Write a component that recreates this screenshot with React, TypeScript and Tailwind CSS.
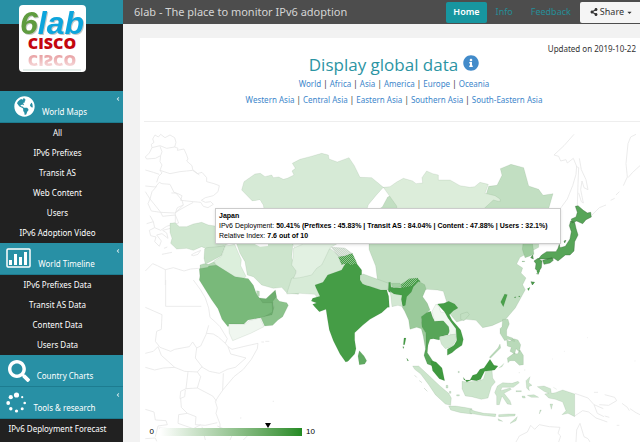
import type { ReactNode } from 'react'
import { FaGlobeAmericas, FaInfoCircle, FaSearch, FaShareAlt, FaCaretDown, FaAngleLeft } from 'react-icons/fa'

const worldLinks = ['World', 'Africa', 'Asia', 'America', 'Europe', 'Oceania']
const regionLinks = ['Western Asia', 'Central Asia', 'Eastern Asia', 'Southern Asia', 'South-Eastern Asia']

function Logo() {
  return (
    <svg viewBox="0 0 67 67" className="w-[67px] h-[67px]" role="img" aria-label="6lab Cisco">
      <defs>
        <linearGradient id="fade" x1="0" y1="0" x2="0" y2="1">
          <stop offset="0" stopColor="#fff" stopOpacity="0.3" />
          <stop offset="1" stopColor="#fff" stopOpacity="0.8" />
        </linearGradient>
      </defs>
      <rect width="67" height="67" rx="4" fill="#fff" />
      <text
        x="1"
        y="29"
        fontFamily="'Liberation Sans', sans-serif"
        fontWeight="700"
        fontStyle="italic"
        fontSize="32"
        fill="#0da5dc"
        style={{ filter: 'drop-shadow(1px 1px 0 #c4c8c6)' }}
      >
        <tspan fill="#5f9c3f">6</tspan>lab
      </text>
      <g fontFamily="'Open Sans', sans-serif" fontWeight="800" fontSize="16" textAnchor="middle" fill="#c4060d">
        <text x="33" y="44">CISCO</text>
        <text x="33" y="-50" transform="scale(1 -1)" opacity="0.6">CISCO</text>
      </g>
      <rect y="48" width="67" height="15" fill="url(#fade)" />
      <path d="M4 65H62" stroke="#e3eeea" strokeWidth="2" />
    </svg>
  )
}

function ChartIcon() {
  return (
    <svg viewBox="0 0 25 21" className="w-[25px] h-[21px]" fill="#fff">
      <rect x="1" y="1" width="23" height="18" rx="1" fill="none" stroke="#fff" strokeWidth="1.5" />
      <path d="M3 12h3v5H3zM8 6h3v11H8zM13 9h3v8h-3zM18 4h3v13h-3z" />
    </svg>
  )
}

function SpinnerIcon() {
  return (
    <svg viewBox="0 0 21 21" className="w-[21px] h-[21px]" fill="#fff">
      <circle cx="10.5" cy="3" r="2.6" />
      <circle cx="4.8" cy="5.2" r="2.1" />
      <circle cx="2.2" cy="11" r="1.9" />
      <circle cx="4.8" cy="16.8" r="1.7" />
      <circle cx="10.5" cy="19" r="1.6" />
      <circle cx="16.2" cy="16.8" r="1.5" />
      <circle cx="18.7" cy="11" r="1.3" />
      <circle cx="16.2" cy="5.2" r="1.1" />
    </svg>
  )
}

const sections: { title: string; icon: ReactNode; items: string[]; arrow: boolean }[] = [
  {
    title: 'World Maps',
    icon: <FaGlobeAmericas className="w-[21px] h-[21px]" />,
    items: ['All', 'IPv6 Prefixes', 'Transit AS', 'Web Content', 'Users', 'IPv6 Adoption Video'],
    arrow: true,
  },
  {
    title: 'World Timeline',
    icon: <ChartIcon />,
    items: ['IPv6 Prefixes Data', 'Transit AS Data', 'Content Data', 'Users Data'],
    arrow: true,
  },
  { title: 'Country Charts', icon: <FaSearch className="w-[22px] h-[22px]" />, items: [], arrow: false },
  { title: 'Tools & research', icon: <SpinnerIcon />, items: ['IPv6 Deployment Forecast'], arrow: true },
]

function Sidebar() {
  return (
    <nav className="w-[123px] shrink-0 bg-[#212121] text-white text-[8px]">
      <div className="h-6 bg-[#2890a5]" />
      <a href="#home" className="flex justify-center h-[67px] pr-[18px]">
        <span className="-mt-[19px]"><Logo /></span>
      </a>
      {sections.map((s) => (
        <div key={s.title}>
          <button type="button" className="relative flex w-full h-8 items-start justify-center gap-[7px] pt-[5px] pr-[22px] bg-[#2890a5] border-b border-[#1d7c90]">
            {s.icon}
            <span className="pt-[10px] leading-3">{s.title}</span>
            {s.arrow && <FaAngleLeft className="absolute right-0.5 top-[5px] w-1.5 h-1.5 opacity-80" />}
          </button>
          <ul>
            {s.items.map((item) => (
              <li key={item}>
                <a href="#data" className="block h-5 leading-5 text-center pr-2">{item}</a>
              </li>
            ))}
          </ul>
        </div>
      ))}
    </nav>
  )
}

function TopBar() {
  return (
    <header className="flex h-6 items-center bg-[#4d4d4d] pl-[11px] overflow-hidden">
      <h1 className="flex-1 text-[11px] whitespace-nowrap text-[#d5d5d5]">6lab - The place to monitor IPv6 adoption</h1>
      <nav className="flex items-center text-[9px] text-[#268d98]">
        <a href="#home" className="h-[21px] leading-5 px-[7px] rounded-xs bg-[#1796a0] font-semibold text-white">Home</a>
        <a href="#info" className="px-[9px]">Info</a>
        <a href="#feedback" className="px-[9px]">Feedback</a>
      </nav>
      <button type="button" className="flex h-[21px] items-center gap-0.5 rounded-l-xs bg-[#f5f5f5] pl-[10px] pr-[7px] text-[9px] text-[#333]">
        <FaShareAlt className="w-2 h-2" />
        Share
        <FaCaretDown className="w-[7px] h-[7px]" />
      </button>
    </header>
  )
}

function LinkRow({ links }: { links: string[] }) {
  return (
    <p className="leading-4 text-[8px] text-[#333]">
      {links.map((l, i) => (
        <span key={l}>
          {i > 0 && ' | '}
          <a href="#region" className="text-[#3c86cb]">{l}</a>
        </span>
      ))}
    </p>
  )
}

// Shapes are drawn on a grid three times finer than the map units, one group per region.
const shape = { fill: 'currentColor', stroke: '#2b5b2b', strokeOpacity: 0.14, strokeWidth: 2, strokeLinejoin: 'round' as const }
const line = { fill: 'none', stroke: '#e6e6e6', strokeWidth: 2.4, strokeLinejoin: 'round' as const }

function AsiaMap() {
  return (
    <svg viewBox="0 0 500 320" className="block w-full" role="img" aria-label="IPv6 adoption in Asia">
      <defs>
        <pattern id="hatch" width="6" height="6" patternUnits="userSpaceOnUse">
          <rect width="6" height="6" fill="#459d46" />
          <path d="M0 0h3v3H0zM3 3h3v3H3z" fill="#8fc48f" />
        </pattern>
        <pattern id="hatchGrey" width="6" height="6" patternUnits="userSpaceOnUse">
          <rect width="6" height="6" fill="#c9d9c9" />
          <path d="M0 0h3v3H0zM3 3h3v3H3z" fill="#dfe6df" />
        </pattern>
      </defs>

      {/* Europe and the Levant */}
      <g transform="translate(0 3) scale(0.33333)" {...line}>
        <path d="M45 30L55 36 62 28 75 38 90 30 104 38 108 52 104 66 114 70 112 76 132 72 140 90 144 102 140 108 156 122 158 134 178 150" />
        <path d="M45 30L38 42 42 52 34 58 36 68 60 62 80 70 104 66M36 68L28 84 16 96 20 102 46 100 62 92 66 80 60 64M62 92L60 110 66 120 60 136 66 144 56 154 50 172M60 136L90 146 120 140 140 138 158 136" />
        <path d="M16 135L40 142 58 148M16 183L46 186 58 172 66 176M16 200L30 222 24 236 34 258" />
        <path d="M158 136L172 146 186 142 200 158 200 170 222 176 238 182 234 200 220 212 196 218 184 226 196 232 212 230 220 238 204 248 190 244 182 232M66 176L90 178 102 202 114 206 126 212 122 226 160 230 182 232M94 204L108 204 126 226 130 240 112 248 106 264" />
        <path d="M50 184L36 200 30 222 48 244 62 262 104 264 120 254 138 244 160 232M34 258L62 262 68 274 106 270 116 294 92 300 80 304 62 316 44 308 40 290 20 296M106 294L106 264 130 240" />
        <path d="M30 272L40 290M44 308L28 316 32 332 48 336 44 350 58 364 64 348 50 330 66 326 84 340 80 324 68 316 92 310M66 388L96 382M72 370L82 366M154 390L164 384 182 376 174 388 160 392z" />
        <path d="M16 438L38 416 52 422 76 434 100 428 132 438 152 432 176 430M76 434V480" />
      </g>

      {/* Africa */}
      <g transform="translate(0 158) scale(0.33333)" {...line}>
        <path d="M77 0V79H184M160 0L182 30 196 54 206 84 210 112 224 124 240 140 262 176 256 190 264 200 276 208 318 198 354 190 352 206 334 238 310 268 282 290 250 328 236 348 226 364 232 384 228 400 240 432 240 452" />
        <path d="M16 82L66 104 64 148 50 154 46 184 60 202 92 214 104 208 148 200 158 186 170 204M16 220L40 214 54 200 64 226 104 262 134 274 172 276 186 260 166 234 170 204 182 198 198 164 206 136" />
        <path d="M200 160L220 162 236 172 256 190M184 260L208 274 238 280 262 268 286 262 318 234 272 222 264 200M250 280L248 330M104 262L70 264 44 270 16 262" />
        <path d="M172 276L182 290 172 324 138 326 144 276M172 324L218 348 230 364M138 326L122 334 120 356 134 350 136 330M122 356L124 382 142 400 168 410 166 434 196 436 232 428M142 400L116 404 114 430 160 446 182 434M16 388L42 396 46 420 78 422 82 434 54 438 46 470M16 476L46 474 50 484M270 480L280 458 276 448M310 480L326 464 348 456M364 186h8M376 184h12M300 414h4M398 364h4M56 444L90 446M186 440L196 480M232 438L250 446 244 462" />
      </g>

      {/* Sea of Okhotsk and Kamchatka */}
      <g transform="translate(330 3) scale(0.33333)" {...line}>
        <path d="M312 28L282 62 252 90 266 94 272 108 288 104 292 114 310 100 320 124 318 148 308 182 292 222 270 252M318 124L326 128 324 178 322 240M328 100L334 134 348 164 354 194 342 188 336 168 332 194 340 234 334 230 326 204M498 28L482 36 474 56 468 116 472 156 460 182M474 158L488 142 510 122M448 200L438 210M434 220L422 226M408 240L388 248 366 270" />
      </g>

      {/* Oceania */}
      <g transform="translate(330 148) scale(0.33333)" {...line}>
        <path d="M314 370L354 384 372 404 400 416M314 438L338 422 356 426 378 444 412 456M372 404L382 430 402 440M404 374L434 382 440 392 416 406 388 404M372 367h12M456 400L472 412 478 422M480 416L498 428 510 434M404 438L418 442M440 466h8M138 516L148 498 172 486 182 466 194 478 208 464 238 470 270 472 264 490 272 498 266 516M318 516L320 480 330 460 342 500 354 506 360 516M352 203h2M282 244h2M246 267h2M494 273h2" />
      </g>

      {/* Western and Central Asia */}
      <g transform="translate(0 3) scale(0.33333)" {...shape}>
        <path className="text-[#d6ead6]" d="M305 195L312 170 345 147 361 145 375 155 395 150 400 158 416 156 430 163 442 160 462 150 456 138 466 130 457 115 480 103 510 95 545 85 565 90 567 102 592 111 627 98 643 122 660 157 695 158 730 187 710 209 685 239 675 270H375L370 240 360 225 337 228z" />
        <path className="text-[#d0e7d0]" d="M90 295L105 293 118 305H140L160 297 185 292 205 300 225 303 285 320 288 345 262 358 245 365 200 372 185 365 160 376 140 370 110 372 92 355 96 340 90 322z" />
        <path className="text-[#c6e1c6]" d="M194 372L200 368 245 364 256 362 244 392 196 418 192 400z" />
        <path className="text-[#b5d8b5]" d="M180 420L192 416 206 418 222 410 230 422 206 430 212 440 194 458 180 456z" />
        <path className="text-[#dcefdc]" d="M256 362L284 358 296 386 304 404 302 422 318 454 310 462 286 458 230 422 222 408 244 394z" />
        <path className="text-[#cde5cd]" d="M284 340L460 340 455 400 470 430 465 455 480 480 475 508 440 503 425 487 400 490 365 480 340 455 322 450 315 410 300 385z" />
        <path className="text-[#eef7ee]" d="M458 357H570L530 360 498 379 472 384z" />
        <path d="M344 357h40v6l-24 2zM312 245L330 231 360 225 370 250H310z" fill="#fff" stroke="none" />
      </g>
      <g transform="translate(0 158) scale(0.33333)" {...shape}>
        <path className="text-[#79b97a]" d="M178 0L180 -12 178 -34 205 -38 206 -42 230 -44 285 -10 325 -4 340 16 348 38 358 54 372 64 398 62 402 106 370 112 324 120 312 132 270 132 264 140 246 118 234 86 214 58z" />
        <path className="text-[#f0f7f0]" d="M266 132L314 133 328 122 360 114 372 140 332 160 278 182 268 160z" />
        <path className="text-[#6dae6e]" d="M358 54L378 56 406 30 410 52 400 66 402 88 396 106 370 112 398 96 396 68 368 68z" />
        <path className="text-[#8bc28b]" d="M408 52L418 64 440 68 445 76 428 110 414 120 398 136 374 138 362 112 396 104 402 82 398 64z" />
        <path className="text-[#b9dab9]" d="M350 32L358 34 358 48 350 46z" />
      </g>

      {/* Eastern Asia */}
      <g transform="translate(160 3) scale(0.33333)" {...shape}>
        <path className="text-[#c2dfc2]" d="M250 187l38 20 8 43h250l20-66 25-3 15-30-5-20 32-13 38 10 15 55 30 10 13 18 30-5-13 45-30 66v50l-56 30-10 20 18 12-5 15 15 15-10 20 8 15-30 55-30 35-40 18-28 6-20-22-30-3-28 8-25-30-5-30-10-32-18-4-30-2-30 6-40 2-60-8-20-30-5-40-20-50V270l40-24 16-30 24-10z" />
        <path className="text-[#dcedda]" d="M250 187l20-2 20-14 20-11 28 8 10 8 20-2-2-16 14-20 18 8 17 4 0 15 35 0 30 17 30 5 14-2 16-13 25 6-10 27 30 7 15 10v8l-20-5-30 28-14 35H294l-4-45z" />
        <path className="text-[#d7ebd7]" d="M90 370L115 392 135 430 95 475 70 480 85 515 55 525 45 508 0 505 -40 507 -25 460 -10 455 20 450 50 420 70 395z" />
        <path className="text-[#e2f1e2]" d="M-20 370L10 357H110L90 368 75 400 65 420 50 430 35 450 0 458 -20 460 -10 440 -25 420 -20 390z" />
      </g>
      <g transform="translate(330 3) scale(0.33333)" {...shape}>
        <path className="text-[#9fcd9f]" d="M160 345l26 0 6 43-14 6-13 4-8-25zM156 408h8v2h-8z" />
        <path
          className="text-[#57a558]"
          strokeOpacity="0.5"
          d="M316 244L324 242 340 256 352 264 362 262 364 276 348 284 338 296 320 288 306 294 304 282 318 276 322 262zM302 288L314 292 318 310 324 330 314 350 312 378 300 390 286 390 264 408 252 400 230 402 205 402 215 390 230 380 258 380 264 370 268 358 270 368 286 364 300 342 304 320 298 302zM192 408L204 400 216 408 214 428 206 440 196 432 198 416zM218 406L246 398 250 406 240 414 222 418zM282 348L288 346 284 354zM183 470L193 472 187 480zM188 390L182 398 190 402zM198 446h8"
        />
      </g>

      {/* Southern Asia */}
      <g transform="translate(160 148) scale(0.33333)" {...shape}>
        <path className="text-[#459d46]" d="M125 0l15-26 20-4 8 8 17 22 0 15-5 10 15 20 35 6 30 8 6 20 2 33-5 0-18 16-35 20-22 18-24 22 0 22 4 26-4 16-20 22-7 2-17-24-20-40-12-32-5-30-5-32-20 7-14-15-6-7 12-4-16-6 4-8 22-6-12-26-3-8 24-8 14-22z" />
        <path className="text-[#459d46]" d="M265 38l6-2 2 16 28 2 16-8 18-16 18-4 8 8-16 16-4 14-8 16-10 10-4 22-12-4-2-10-8-4 4-14-30-12-6-4z" />
        <path fill="url(#hatch)" d="M302 44l26-18 26-2-4 12-14 12-30 6z" />
        <path fill="url(#hatch)" d="M115 -40l18-4 24-6 14 30-18 6-10-6-18 4z" />
        <path fill="url(#hatchGrey)" d="M94 -68l40 2 22 16-22 8-18 2z" />
        <path className="text-[#c5e0c5]" d="M180 16l10-4 76 28-2 20-22 0-54-18-8-12z" />
        <path className="text-[#a3d0a3]" d="M274 40l26 0 4 10-24 4z" />
        <path className="text-[#d3e8d3]" d="M270 64l12 8 24 4-2 12 4 22-14-4-18 4-4-34z" />
        <path className="text-[#60aa61]" d="M178 242l14 16 8 14-6 10-16 2-4-26z" />
        <path className="text-[#459d46]" d="M312 204l6 0-4 20-4 0zM308 230l4 0-2 6zM320 264l6 8-4 0z" />
      </g>

      {/* South-Eastern Asia */}
      <g transform="translate(160 148) scale(0.33333)" {...shape}>
        <path className="text-[#9bca9b]" d="M356 34L374 44 378 56 368 80 382 100 390 120 372 138 364 146 368 170 378 190 382 230 376 236 370 200 364 176 350 172 330 178 326 150 314 124 306 110 316 106 320 80 334 66 340 50z" />
        <path className="text-[#57a558]" d="M364 140L380 128 392 124 398 142 404 154 424 150 444 158 450 180 444 194 420 200 418 210 400 206 390 208 384 226 382 248 398 272 410 282 404 290 382 282 374 262 372 256 378 230 378 190 366 170z" />
        <path className="text-[#f0f8f0]" d="M396 124L408 102 418 112 422 126 438 128 448 148 468 176 466 194 450 194 446 170 430 152 404 154z" />
        <path className="text-[#469e47]" d="M412 102L432 100 446 94 464 102 474 114 460 122 448 134 456 150 482 180 490 208 486 226 468 238 456 248 442 256 442 238 462 226 470 212 468 176 444 144 434 126z" />
        <path className="text-[#d0e7d0]" d="M418 200L442 196 466 192 470 208 456 230 436 236 424 222z" />
        <path className="text-[#3f993f]" d="M392 272L408 276 426 294 434 332 418 326 398 302z" />
        <path className="text-[#cce5cc]" d="M338 288l18 0 30 28 34 32 26 22 8 14-2 22-16-4-30-28-20-30-24-32-18-14zM446 408l20 0 26 4 24 4 0 16-34-4-30-8zM438 346h6v8h-6zM448 364h5v6h-5zM344 316l6 6zM358 332l8 6zM372 354l10 10zM470 374h8v4h-8zM474 304h4v4h-4z" />
        <path className="text-[#c2dfc2]" d="M482 132l20-6 6 8-16 18-10-4z" />
      </g>
      <g transform="translate(330 148) scale(0.33333)" {...shape}>
        <path className="text-[#4ba14c]" d="M104 72L112 74 100 110 92 96zM132 82l6-2-2 4zM146 78h4v2h-4zM172 56l8-4-4 10zM186 36l8 0-6 8zM200 2l10 0-6 12z" />
        <path className="text-[#cce5cc]" d="M-24 334L-10 336 20 334 40 328 48 302 66 300 68 324 76 336 64 350 54 384 34 388 4 380 -14 378 -24 356z" />
        <path className="text-[#3f993f]" d="M-20 322L-18 330 0 330 8 316 20 312 30 298 42 294 60 268 72 286 84 288 74 300 44 304 32 328 20 332 4 330 -10 336z" />
        <path className="text-[#b9dab9]" d="M98 148l16 0 4 14-8 18 0 18 18 6 6 10-20-6-10 4-14-22 0-14 6-6zM90 222l2 12-30 30-4-2 26-28zM110 210l10 4 12-8 12 4 8 14-4 22-10-10-4 16-14-8 4-12-12-4zM112 264l20-14 10 2 8-12 10 16 0 28-12 2-14-14-14 0-6 6z" />
        <path className="text-[#cce5cc]" d="M82 348l16-10 28 2 18-6 4 4-18 14-34 0-4 10 28-8 4 4-22 12 18 22 4 12-12-2-16-24-8 26-8 0 0-26-6-10zM168 332l12-12-4 18 10 8-10 4 2 12-8-8zM172 376l20-2 14 8-22 0zM156 378l8 0 2 6-8 0zM138 362h16v3h-16zM202 350L222 348 242 356 244 370 256 368 278 360 314 372V440L294 430 276 434 288 422 278 396 256 388 236 384 224 372 236 370 222 364zM240 402l8 0-4 16zM210 420l4 0-6 12zM0 418l16 6 26 6 36 2-2 8-40-4-36-6zM86 434l30-2 20 0-2 6-48 2zM120 460l22-20-4 12-16 8zM84 446l14 8-12-2zM250 352l10 6M146 308h4M162 300h4M86 294l10-4 6-10" />
      </g>
    </svg>
  )
}

function Tooltip() {
  return (
    <div className="absolute left-[15%] top-[86px] border border-[#ccc] bg-white pl-[3px] pr-3 py-[2px] shadow-sm whitespace-nowrap font-['Liberation_Sans',sans-serif] text-[7px] leading-[10px] text-black">
      <strong className="block">Japan</strong>
      <span className="block">
        IPv6 Deployment: <strong>50.41% (Prefixes : 45.83% | Transit AS : 84.04% | Content : 47.88% | Users : 32.1%)</strong>
      </span>
      <span className="block">Relative Index: <strong>7.6 out of 10</strong></span>
    </div>
  )
}

function Legend({ value }: { value: number }) {
  return (
    <div className="absolute left-2 bottom-1 flex items-center gap-1 font-['Liberation_Sans',sans-serif] text-[8px] leading-3 text-black">
      <span className="w-[6px] text-right">0</span>
      <div className="relative ml-0.5 w-[142px] h-2 bg-linear-to-r from-white to-[#228b22]">
        <svg viewBox="0 0 6 5" className="absolute -top-[5px] -ml-[3px] w-[6px] h-[5px]" style={{ left: `${value * 10}%` }}>
          <path d="M0 0h6L3 5z" />
        </svg>
      </div>
      <span>10</span>
    </div>
  )
}

export default function App() {
  return (
    <div className="flex min-h-screen font-['Noto_Sans','Open_Sans',sans-serif] bg-[#f2f2f2]">
      <Sidebar />
      <div className="flex flex-col flex-1 min-w-0">
        <TopBar />
        <main className="flex-1 ml-[17px] mt-[14px] bg-white">
          <div className="text-right text-[8px] leading-3 pt-[5px] pr-1 text-[#333]">Updated on 2019-10-22</div>
          <div className="ml-2 text-center">
            <h2 className="flex items-center justify-center gap-[5px] text-[17px] leading-5 text-[#2b94a3] font-['Open_Sans',sans-serif]">
              Display global data
              <FaInfoCircle className="w-4 h-4 mb-1 text-[#428bca]" />
            </h2>
            <div className="pt-px">
              <LinkRow links={worldLinks} />
              <LinkRow links={regionLinks} />
            </div>
          </div>
          <hr className="ml-1 mt-[13px] border-[#eee]" />
          <div className="relative">
            <AsiaMap />
            <Tooltip />
            <Legend value={7.6} />
          </div>
        </main>
      </div>
    </div>
  )
}
